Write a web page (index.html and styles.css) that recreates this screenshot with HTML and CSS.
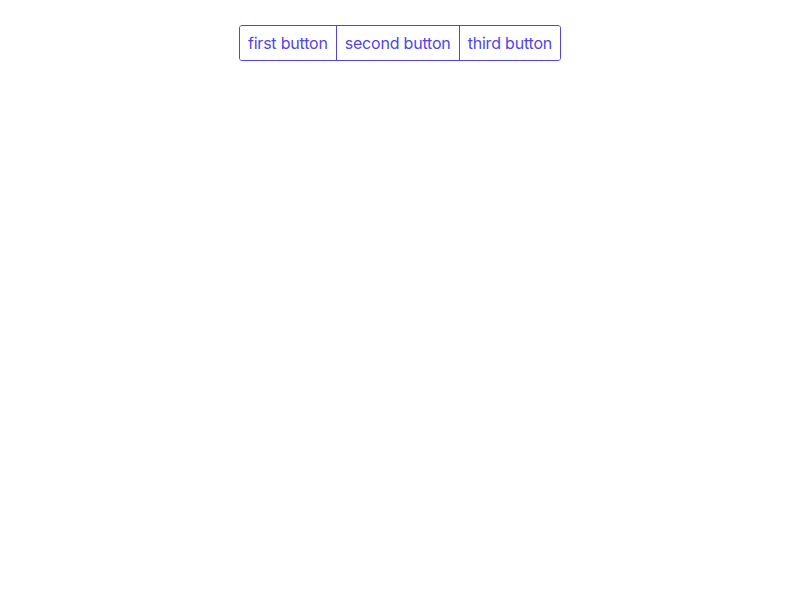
FILE: index.html
```html
<!DOCTYPE html>
<html>
<head>
<meta charset="utf-8">
<link rel="stylesheet" href="styles.css">
</head>
<body>
<div class="wrap">
  <div class="group">
    <button class="btn">first button</button>
    <button class="btn">second button</button>
    <button class="btn">third button</button>
  </div>
</div>
</body>
</html>
```
FILE: styles.css
```css
html, body { margin: 0; padding: 0; background: #fff; }
body { font-family: Inter, "Noto Sans", sans-serif; }
.wrap { display: flex; justify-content: center; padding-top: 25px; }
.group { display: flex; border: 1px solid #4f46e5; border-radius: 3px; overflow: hidden; }
.btn {
  font-family: inherit; font-size: 16px; line-height: 24px;
  letter-spacing: -0.2px;
  color: #4f46e5; background: #fff; border: 0; margin: 0;
  padding: 5px 8px;
}
.btn + .btn { border-left: 1px solid #4f46e5; }
```
